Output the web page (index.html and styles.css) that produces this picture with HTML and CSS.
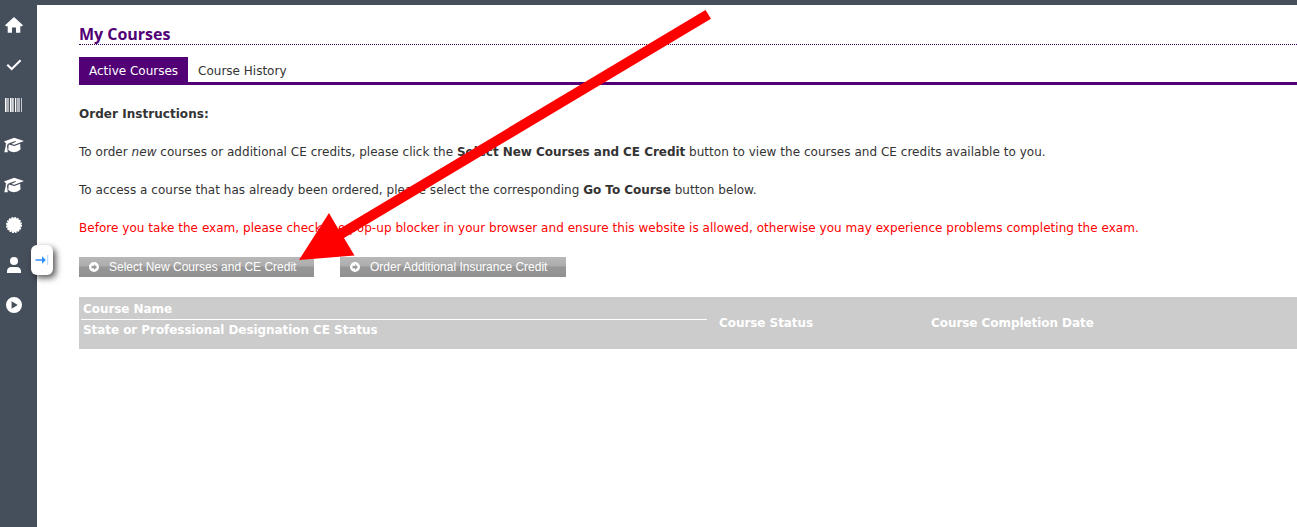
FILE: index.html
```html
<!DOCTYPE html>
<html lang="en">
<head>
<meta charset="utf-8">
<title>My Courses</title>
<link rel="stylesheet" href="styles.css">
</head>
<body>
<svg class="defs" width="0" height="0" aria-hidden="true">
  <symbol id="cap" viewBox="0 0 20 16">
    <path d="M10.2 .8L20 4.1L10.4 7.8L7.2 6.9L11.8 4.8L11.4 4L5 6.2Q3.2 7 3 9L3.8 15.2H.3L1.8 9Q1.3 7.7 2.3 6.7L0 4.6Z"/>
    <path d="M4.7 7.4L10.4 9L16.2 6.8L16.5 12.6Q13.7 15.2 9.8 15.2Q6 15.1 4.3 13Z"/>
  </symbol>
  <symbol id="next" viewBox="0 0 10 10">
    <path fill-rule="evenodd" d="M5 0A5 5 0 1 0 5 10A5 5 0 1 0 5 0ZM5 2L8 5L5 8V6.3H2.5V3.7H5Z"/>
  </symbol>
</svg>
<div class="shell">
  <nav class="sidebar">
    <a class="nav-item"><svg width="18" height="16" viewBox="0 0 18 16"><path d="M9 0L18 8.2L17 9.2H15.3V15.8H11V10.6H7V15.8H2.7V9.2H1L0 8.2Z"/></svg></a>
    <a class="nav-item"><svg width="16" height="12" viewBox="0 0 16 12"><path class="stroke" d="M1.3 5.8L5.7 10L14.6 1.2"/></svg></a>
    <a class="nav-item"><svg width="17" height="14" viewBox="0 0 17 14"><path d="M0 0H1V14H0ZM5 0H6.4V14H5ZM7.3 0H8V14H7.3ZM10 0H11.3V14H10ZM16 0H16.7V14H16Z"/><path opacity=".58" d="M1 0H4V14H1ZM6.4 0H7.3V14H6.4ZM8 0H9V14H8ZM12 0H15V14H12Z"/></svg></a>
    <a class="nav-item"><svg width="20" height="16"><use href="#cap"/></svg></a>
    <a class="nav-item"><svg width="20" height="16"><use href="#cap"/></svg></a>
    <a class="nav-item"><svg width="16" height="16" viewBox="-8 -8 16 16"><circle r="6.9"/><circle class="scallop" r="7"/></svg></a>
    <a class="nav-item"><svg width="14" height="16" viewBox="0 0 14 16"><circle cx="7" cy="4" r="4"/><path d="M0 16V14.6Q0 10 4.6 10H9.400Q14 10 14 14.600V16Z"/></svg></a>
    <a class="nav-item"><svg width="16" height="16" viewBox="0 0 16 16"><path fill-rule="evenodd" d="M8 0A8 8 0 1 0 8 16A8 8 0 1 0 8 0ZM5.600 4.300L11.700 8L5.600 11.700Z"/></svg></a>
    <button class="expand"><svg width="14" height="12" viewBox="0 0 14 12"><path class="arrow" d="M.5 5.2H7V2.2L10.8 6L7 9.8V6.8H.5Z"/><path class="edge" d="M12 1H13.2V11H12Z"/></svg></button>
  </nav>
  <main class="content">
    <h1 class="title">My Courses</h1>
    <div class="tabs"><a class="tab active">Active Courses</a><a class="tab">Course History</a></div>
    <p class="line"><b class="lead">Order Instructions:</b></p>
    <p class="line">To order <i>new</i> courses or additional CE credits, please click the <b>Select New Courses and CE Credit</b> button to view the courses and CE credits available to you.</p>
    <p class="line">To access a course that has already been ordered, please select the corresponding <b>Go To Course</b> button below.</p>
    <p class="line warning">Before you take the exam, please check the pop-up blocker in your browser and ensure this website is allowed, otherwise you may experience problems completing the exam.</p>
    <div class="actions">
      <a class="button select"><svg width="10" height="10"><use href="#next"/></svg>Select New Courses and CE Credit</a>
      <a class="button order"><svg width="10" height="10"><use href="#next"/></svg>Order Additional Insurance Credit</a>
    </div>
    <div class="table-head">
      <div class="name-col"><div class="course-name">Course Name</div><div class="designation">State or Professional Designation CE Status</div></div>
      <div class="status-col">Course Status</div>
      <div class="date-col">Course Completion Date</div>
    </div>
  </main>
</div>
<svg class="pointer" width="1297" height="527" viewBox="0 0 1297 527"><path d="M705.5 10L711 18.7L344 238L354.500 255.500L299 260L329 213L338.500 229.500Z"/></svg>
</body>
</html>
```
FILE: styles.css
```css
* { box-sizing: border-box; }
body { margin: 0; height: 527px; overflow: hidden; background: #fff; color: #333; font: 12px/19px "DejaVu Sans", sans-serif; }
.defs { position: absolute; }
.shell { display: flex; height: 527px; border-top: 5px solid #454e5b; }
.sidebar { position: relative; flex: 0 0 37px; background: #454e5b; }
.nav-item { display: flex; width: 27px; height: 40px; align-items: center; justify-content: center; }
.nav-item svg { flex: none; fill: #fff; }
.stroke { fill: none; stroke: #fff; stroke-width: 2; }
.scallop { fill: none; stroke: #fff; stroke-width: 2; stroke-dasharray: 1.9 .85; }
.expand { position: absolute; left: 31px; top: 240px; width: 22px; height: 30px; display: flex; align-items: center; justify-content: center; padding: 0; border: 0; border-radius: 6px; background: #fff; box-shadow: 3px 3px 6px rgba(0,0,0,.65); }
.arrow { fill: #2d8cff; }
.edge { fill: #b9d9ff; }
.content { flex: 1; min-width: 0; padding: 17px 0 0 42px; }
.title { height: 23px; margin: 0 0 12px; border-bottom: 1px dotted #3b0057; color: #520076; font: bold 16px/24px "Open Sans", "Noto Sans", sans-serif; letter-spacing: -.02px; }
.tabs { display: flex; height: 28px; margin-bottom: 20px; border-bottom: 3px solid #520076; }
.tab { padding: 5px 10px 0; line-height: 18px; }
.active { background: #520076; color: #fff; }
.line { margin: 0 0 19px; white-space: nowrap; letter-spacing: .034px; }
.line b { letter-spacing: -.04px; }
.line .lead { letter-spacing: .04px; }
.warning { color: #f00; }
.actions { display: flex; gap: 26px; margin-bottom: 20px; }
.button { display: flex; align-items: center; height: 20px; padding-left: 10px; background: linear-gradient(#b8b8b8, #adadad 44%, #979797 50%, #909090); color: #fff; font: 12px/20px "Liberation Sans", sans-serif; white-space: nowrap; }
.button svg { flex: none; margin-right: 10px; fill: #fff; }
.select { width: 235px; }
.order { width: 226px; }
.table-head { display: flex; height: 52px; align-items: center; background: #ccc; color: #fff; font-weight: bold; letter-spacing: -.06px; }
.name-col { flex: 0 0 628px; align-self: stretch; padding-left: 2px; }
.course-name { height: 23px; padding: 3px 2px 0; border-bottom: 1px solid #fff; line-height: 18px; }
.designation { padding: 1px 2px; line-height: 18px; }
.status-col { flex: 0 0 212px; margin-left: 12px; }
.pointer { position: absolute; left: 0; top: 0; fill: #f00; pointer-events: none; }
```
